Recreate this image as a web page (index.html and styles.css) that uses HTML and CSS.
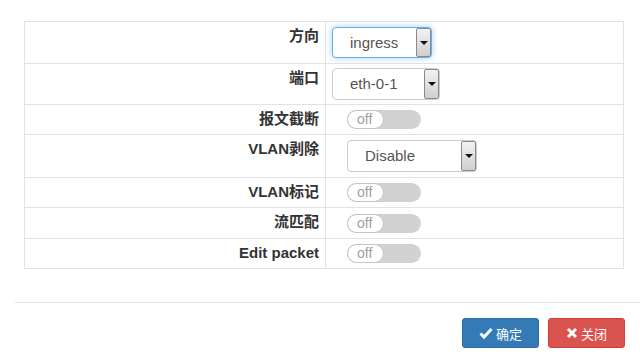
FILE: index.html
```html
<!DOCTYPE html>
<html lang="zh">
<head>
    <meta charset="UTF-8">
    <title>镜像配置</title>
    <link rel="stylesheet" href="styles.css">
</head>
<body>
    <div class="modal-body">
        <table class="form-table">
            <tr class="h42">
                <td class="label">方向</td>
                <td class="value">
                    <div class="select focus w100"><span>ingress</span><i class="caret-btn"></i></div>
                </td>
            </tr>
            <tr class="h41">
                <td class="label">端口</td>
                <td class="value">
                    <div class="select w108"><span>eth-0-1</span><i class="caret-btn"></i></div>
                </td>
            </tr>
            <tr class="h30">
                <td class="label">报文截断</td>
                <td class="value indent"><div class="toggle"><span>off</span></div></td>
            </tr>
            <tr class="h43">
                <td class="label">VLAN剥除</td>
                <td class="value indent">
                    <div class="select w130"><span>Disable</span><i class="caret-btn"></i></div>
                </td>
            </tr>
            <tr class="h30">
                <td class="label">VLAN标记</td>
                <td class="value indent"><div class="toggle"><span>off</span></div></td>
            </tr>
            <tr class="h31">
                <td class="label">流匹配</td>
                <td class="value indent"><div class="toggle"><span>off</span></div></td>
            </tr>
            <tr class="h30">
                <td class="label">Edit packet</td>
                <td class="value indent"><div class="toggle"><span>off</span></div></td>
            </tr>
        </table>
    </div>
    <div class="modal-footer">
        <button class="btn btn-primary">
            <svg width="14" height="14" viewBox="0 0 14 14"><path d="M1.5 7.5 L5 11 L12.5 3" fill="none" stroke="#fff" stroke-width="3"/></svg>确定
        </button>
        <button class="btn btn-danger">
            <svg width="12" height="12" viewBox="0 0 12 12"><path d="M2 2 L10 10 M10 2 L2 10" fill="none" stroke="#fff" stroke-width="3"/></svg>关闭
        </button>
    </div>
</body>
</html>
```

FILE: styles.css
```css
body {
    margin: 0;
    background: #fff;
    font-family: "Liberation Sans", "Noto Sans CJK SC", sans-serif;
    color: #333;
}
.modal-body {
    padding: 21px 16px 0 24px;
}
.form-table {
    width: 600px;
    border-collapse: collapse;
    border: 1px solid #e2e2e2;
}
.form-table td {
    border: 1px solid #e2e2e2;
    padding: 0;
}
.form-table .label {
    width: 294px;
    text-align: right;
    vertical-align: top;
    font-size: 15px;
    font-weight: bold;
    line-height: 18px;
    padding: 5px 6px 0 0;
}
.form-table .value {
    vertical-align: middle;
    padding-left: 6px;
}
.form-table .value.indent {
    padding-left: 21px;
}
.h42 td { height: 36px; }
.h41 td { height: 35px; }
.h30 td { height: 24px; }
.h31 td { height: 25px; }
.h43 td { height: 37px; }

.select {
    position: relative;
    box-sizing: border-box;
    height: 32px;
    border: 1px solid #ccc;
    border-radius: 4px;
    background: #fff;
    font-size: 15px;
    color: #555;
    line-height: 30px;
    padding-left: 17px;
}
.select.focus {
    height: 31px;
    line-height: 29px;
    border-color: #66afe9;
    box-shadow: 0 0 6px rgba(102, 175, 233, 0.6);
}
.w100 { width: 100px; }
.w108 { width: 108px; }
.w130 { width: 130px; }
.caret-btn {
    position: absolute;
    top: 0;
    right: 0;
    bottom: 0;
    width: 15px;
    box-sizing: border-box;
    border: 1px solid #8a8a8a;
    border-radius: 2px;
    background: linear-gradient(#f2f2f2, #cfcfcf);
}
.caret-btn::after {
    content: "";
    position: absolute;
    left: 3px;
    top: 50%;
    margin-top: -2px;
    border-left: 4px solid transparent;
    border-right: 4px solid transparent;
    border-top: 4px solid #111;
}

.toggle {
    width: 74px;
    height: 19px;
    border-radius: 10px;
    background: #d2d2d2;
    position: relative;
}
.toggle span {
    display: block;
    box-sizing: border-box;
    width: 37px;
    height: 19px;
    border: 1px solid #c4c4c4;
    border-radius: 10px;
    background: #fff;
    color: #a0a0a0;
    font-size: 14px;
    line-height: 17px;
    padding-left: 9px;
}

.modal-footer {
    margin: 33px 0 0 15px;
    border-top: 1px solid #e5e5e5;
    padding: 15px 15px 0 0;
    display: flex;
    justify-content: flex-end;
    gap: 9px;
}
.btn {
    box-sizing: border-box;
    width: 77px;
    height: 30px;
    border: 1px solid;
    border-radius: 3px;
    color: #fff;
    font-family: "Liberation Sans", "Noto Sans CJK SC", sans-serif;
    font-size: 13px;
    display: flex;
    align-items: center;
    justify-content: center;
    gap: 3px;
    padding: 0;
}
.btn-primary {
    background: #337ab7;
    border-color: #2e6da4;
}
.btn-danger {
    background: #d9534f;
    border-color: #d43f3a;
}
```
